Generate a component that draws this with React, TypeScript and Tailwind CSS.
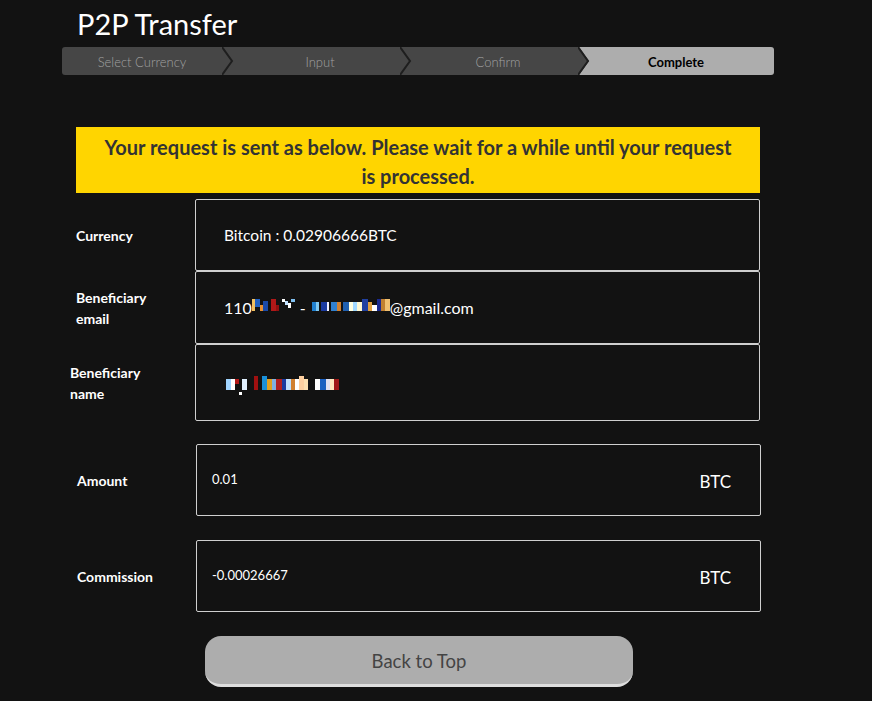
import React from "react";

const font = { fontFamily: "Lato, 'Open Sans', sans-serif" };

const steps = ["Select Currency", "Input", "Confirm", "Complete"];

// redacted mosaic blocks: [color, grow, height, top]
type Block = [string, number, number, number];

const emailA: Block[] = [
  ["#f0c060", 3, 12, 0], ["#2060c0", 4, 8, 0], ["#e89030", 3, 6, 6], ["#1a4aa8", 4, 10, 2],
  ["#121212", 3, 4, 0], ["#b01818", 4, 12, 0], ["#901010", 3, 6, 6], ["#121212", 3, 3, 0],
  ["#ffffff", 2, 3, 0], ["#c0e0ff", 3, 4, 2], ["#ffffff", 3, 5, 4], ["#80c0f0", 3, 3, 0],
];

const emailB: Block[] = [
  ["#2080d0", 3, 9, 3], ["#80c8f0", 2, 9, 3], ["#121212", 1, 9, 3], ["#1a3aa0", 4, 9, 3],
  ["#f0f0ff", 2, 9, 3], ["#121212", 1, 9, 3], ["#3080d0", 4, 9, 3], ["#d08030", 3, 9, 3],
  ["#121212", 1, 9, 3], ["#2060b0", 4, 9, 3], ["#ffffe0", 3, 9, 3], ["#a0d8ff", 3, 9, 3],
  ["#fff8d0", 3, 9, 3], ["#2040a0", 4, 12, 0], ["#e0a040", 3, 9, 3], ["#ffffff", 3, 6, 6],
  ["#1a2a90", 3, 12, 0], ["#c08030", 3, 12, 0], ["#f0c070", 3, 12, 0],
];

const nameBlocks: Block[] = [
  ["#a0d4ff", 4, 11, 3], ["#ffffff", 3, 11, 3], ["#b01818", 3, 5, 3], ["#ffffff", 2, 3, 16],
  ["#e0f0ff", 4, 11, 3], ["#121212", 5, 1, 0], ["#a01010", 3, 14, 0], ["#121212", 3, 1, 0],
  ["#1a90d8", 4, 14, 0], ["#e0a020", 4, 11, 3], ["#80b0e0", 3, 11, 3], ["#b02020", 4, 11, 3],
  ["#1a3aa0", 3, 11, 3], ["#c0e0ff", 4, 11, 3], ["#d08030", 3, 11, 3], ["#ffffff", 3, 11, 3],
  ["#ffd0a0", 4, 14, 0], ["#ffe0b0", 3, 11, 3], ["#121212", 5, 1, 0], ["#ffffff", 4, 11, 3],
  ["#1a60c0", 4, 11, 3], ["#e0e0f0", 3, 11, 3], ["#ffe8c0", 3, 11, 3], ["#a01818", 4, 11, 3],
];

function Mosaic({ blocks, width }: { blocks: Block[]; width: number }) {
  return (
    <span className="inline-flex items-start h-[17px] align-middle" style={{ width }}>
      {blocks.map((b, i) => (
        <span
          key={i}
          className="block"
          style={{ backgroundColor: b[0], flexGrow: b[1], flexBasis: 0, height: b[2], marginTop: b[3] }}
        />
      ))}
    </span>
  );
}

function StepBar() {
  return (
    <div className="flex h-[28px] rounded-[3px] overflow-hidden">
      {steps.map((s, i) => {
        const last = i === steps.length - 1;
        const color = last ? "#adadad" : "#464646";
        const next = i + 1 === steps.length - 1 ? "#adadad" : "#464646";
        return (
          <div
            key={s}
            className={
              "relative flex-1 flex items-center justify-center pr-[18px] pt-[3px] text-[13px] " +
              (last ? "text-black font-bold" : "text-[#a0a0a0] font-light")
            }
            style={{ backgroundColor: color }}
          >
            {s}
            {!last && (
              <svg className="absolute right-0 top-0" width="18" height="28" viewBox="0 0 18 28">
                <polygon points="1,0 18,0 18,28 1,28 11,14" fill={next} />
                <polyline points="0,0 10,14 0,28" fill="none" stroke="#1e1e1e" strokeWidth="2" />
              </svg>
            )}
          </div>
        );
      })}
    </div>
  );
}

function Row({
  label,
  boxClass,
  labelClass = "",
  children,
}: {
  label: React.ReactNode;
  boxClass: string;
  labelClass?: string;
  children: React.ReactNode;
}) {
  return (
    <div className="flex">
      <div className={"w-[119px] flex items-center text-white font-bold text-[14px] leading-[21px] " + labelClass}>
        {label}
      </div>
      <div className={"flex-1 border border-[#cfcfcf] rounded-[2px] bg-[#121212] flex items-center " + boxClass}>
        {children}
      </div>
    </div>
  );
}

export default function App() {
  return (
    <div className="min-h-[701px] bg-[#121212] text-white" style={font}>
      <div className="ml-[62px] w-[712px]">
        <h1 className="pt-[7px] pl-[15px] h-[40px] text-[29px] leading-[34px] font-normal">P2P Transfer</h1>
        <div className="mt-[7px]">
          <StepBar />
        </div>

        <div className="ml-[14px] w-[684px] mt-[52px] bg-[#ffd500] pt-[6px] pb-[2px] text-center text-[#333] font-bold text-[20px] leading-[29px]">
          Your request is sent as below. Please wait for a while until your request
          <br />
          is processed.
        </div>

        <div className="ml-[14px] w-[684px] mt-[6px]">
          <Row label="Currency" boxClass="h-[72px] pl-[28px] pt-[1px]">
            <span className="text-[15.5px]">Bitcoin : 0.02906666BTC</span>
          </Row>
          <Row
            label={
              <span>
                Beneficiary
                <br />
                email
              </span>
            }
            boxClass="h-[73px] pl-[28px]"
          >
            <span className="text-[16px] flex items-center">
              110
              <Mosaic blocks={emailA} width={43} />
              <span className="ml-[5px] mr-[6px]">-</span>
              <Mosaic blocks={emailB} width={78} />
              @gmail.com
            </span>
          </Row>
          <Row
            label={
              <span>
                Beneficiary
                <br />
                name
              </span>
            }
            labelClass="-ml-[6px] w-[125px]"
            boxClass="h-[77px] pl-[30px] pt-[3px]"
          >
            <Mosaic blocks={nameBlocks} width={113} />
          </Row>
        </div>

        <div className="ml-[15px] w-[684px] mt-[23px] space-y-[24px]">
          <Row label="Amount" boxClass="h-[72px] pl-[15px] pr-[29px] justify-between">
            <span className="text-[13px]">0.01</span>
            <span className="text-[17px] mt-[3px]">BTC</span>
          </Row>
          <Row label="Commission" boxClass="h-[72px] pl-[15px] pr-[29px] justify-between">
            <span className="text-[13px]">-0.00026667</span>
            <span className="text-[17px] mt-[3px]">BTC</span>
          </Row>
        </div>

        <button className="block ml-[143px] mt-[24px] w-[428px] h-[51px] pt-[3px] rounded-[16px] bg-[#adadad] border-b-[3px] border-[#dedede] text-[#444] text-[18.5px]">
          Back to Top
        </button>
      </div>
    </div>
  );
}
